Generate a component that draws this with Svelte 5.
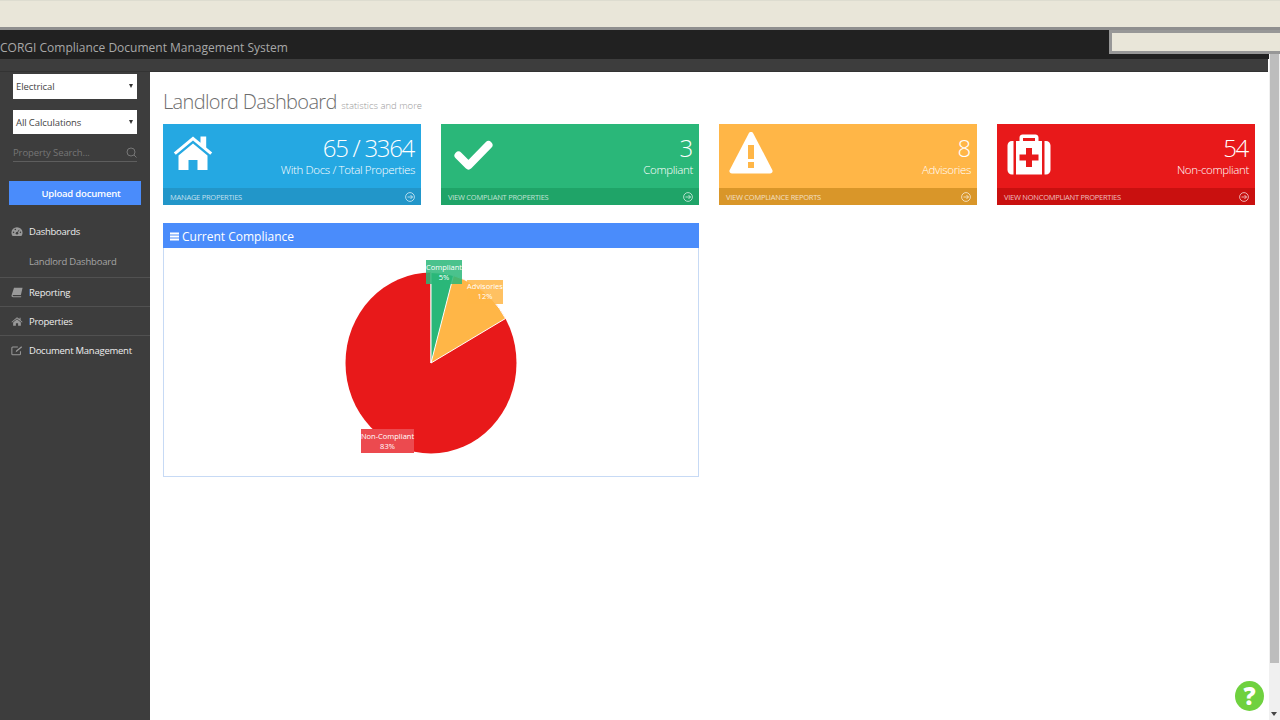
<script>
  const cards = [
    { value: '65 / 3364', label: 'With Docs / Total Properties', link: 'MANAGE PROPERTIES', tone: 'blue', icon: 'home' },
    { value: '3', label: 'Compliant', link: 'VIEW COMPLIANT PROPERTIES', tone: 'green', icon: 'check' },
    { value: '8', label: 'Advisories', link: 'VIEW COMPLIANCE REPORTS', tone: 'amber', icon: 'warn' },
    { value: '54', label: 'Non-compliant', link: 'VIEW NONCOMPLIANT PROPERTIES', tone: 'red', icon: 'kit' }
  ];
</script>

<div class="page">
  <div class="topstrip"></div>
  <header class="brand">CORGI Compliance Document Management System</header>
  <div class="floatbox"></div>
  <div class="band"></div>

  <div class="layout">
    <aside class="sidebar">
      <div class="selectbox first">Electrical<span class="caret"></span></div>
      <div class="selectbox second">All Calculations<span class="caret"></span></div>
      <div class="search">
        <span>Property Search...</span>
        <svg width="11" height="11" viewBox="0 0 11 11" fill="none" stroke="#777" stroke-width="1">
          <circle cx="5" cy="5" r="4" />
          <path d="M8 8l2.5 2.5" />
        </svg>
      </div>
      <button class="upload">Upload document</button>

      <nav>
        <div class="navitem open">
          <svg class="navicon" viewBox="0 0 14 12" fill="#999">
            <path d="M7 1a6.500 6.500 0 0 0-6.500 6.500c0 1.500.5 2.800 1.300 3.800h10.400c.8-1 1.300-2.300 1.300-3.800A6.500 6.500 0 0 0 7 1z" />
            <circle cx="7" cy="8" r="1.500" fill="#3d3d3d" />
            <path d="M7 8l2.500-4" stroke="#3d3d3d" stroke-width="1" />
            <circle cx="3" cy="7" r=".9" fill="#3d3d3d" />
            <circle cx="11" cy="7" r=".9" fill="#3d3d3d" />
            <circle cx="5" cy="3.700" r=".9" fill="#3d3d3d" />
          </svg>
          Dashboards
        </div>
        <div class="subitem">Landlord Dashboard</div>
        <div class="navitem">
          <svg class="navicon" viewBox="0 0 14 12" fill="#999">
            <path d="M3.500 .5h10l-2 8.500H3c-.8 0-1 .4-1 .7s.3.6 1 .6h9l-.3 1.200H2.500C1.200 11.500.500 10.500.6 9.500z" />
          </svg>
          Reporting
        </div>
        <div class="navitem">
          <svg class="navicon" viewBox="0 0 14 12" fill="#999">
            <path d="M7 1L.5 6.500l.7.700L7 2.500l5.800 4.700.7-.7-2.300-2V1.500H10v1.700z" />
            <path d="M2.500 7.200L7 3.500l4.500 3.700V11H8.300V8H5.700v3H2.500z" />
          </svg>
          Properties
        </div>
        <div class="navitem">
          <svg class="navicon" viewBox="0 0 14 12" fill="none" stroke="#999" stroke-width="1.200">
            <path d="M11 7v3c0 .6-.4 1-1 1H2c-.6 0-1-.4-1-1V3c0-.6.4-1 1-1h6" />
            <path d="M5.500 8l.5-2 6-5 1 1.200-6 5z" fill="#999" stroke="none" />
          </svg>
          Document Management
        </div>
      </nav>
    </aside>

    <main class="content">
      <h1>Landlord Dashboard <small>statistics and more</small></h1>

      <div class="cards">
        {#each cards as card}
          <div class="card {card.tone}">
            <div class="cardbody">
              {#if card.icon === 'home'}
                <svg class="bigicon" viewBox="0 0 40 36" fill="#fff">
                  <path d="M20 1.500L.8 17.500l2 2.300L20 5.500l17.200 14.300 2-2.300-6-5V1.500h-5.700v6.300z" />
                  <path d="M5.500 20.500L20 8.500l14.500 12V35H24.500V25h-9v10H5.500z" />
                </svg>
              {:else if card.icon === 'check'}
                <svg class="bigicon check" viewBox="0 0 40 36" fill="none" stroke="#fff" stroke-width="8" stroke-linejoin="round" stroke-linecap="round">
                  <path d="M4.500 17.500L14.500 27.500 34.500 7" />
                </svg>
              {:else if card.icon === 'warn'}
                <svg class="bigicon warn" viewBox="0 0 44 43" fill="#fff">
                  <path d="M22 1c1 0 1.800.5 2.300 1.400l19 36.500c.9 1.800-.3 3.600-2.300 3.600H3c-2 0-3.200-1.800-2.300-3.600l19-36.500C20.200 1.500 21 1 22 1z" />
                  <path d="M19 14h6v14h-6zM19 31h6v6h-6z" fill="#ffb647" />
                </svg>
              {:else}
                <svg class="bigicon kit" viewBox="0 0 44 41" fill="#fff">
                  <path d="M12.500 7V3.500C12.500 1.500 14 .5 15.500.5h13c1.500 0 3 1 3 3V7h-3.500V4H16v3z" />
                  <path d="M9 7h26v33.500H9zM6.500 7v33.500H5c-2.500 0-4.500-2-4.500-4.500V11.500C.5 9 2.500 7 5 7zM37.500 7H39c2.500 0 4.500 2 4.500 4.500V36c0 2.500-2 4.500-4.500 4.500h-1.500z" />
                  <path d="M19 14h6v6.500h6.500v6H25V33h-6v-6.500h-6.500v-6H19z" fill="#e8191a" />
                </svg>
              {/if}
              <div class="stat">
                <div class="value">{card.value}</div>
                <div class="label">{card.label}</div>
              </div>
            </div>
            <div class="cardfoot">
              <span>{card.link}</span>
              <svg width="10" height="10" viewBox="0 0 10 10" fill="none" stroke="currentColor" stroke-width=".9">
                <circle cx="5" cy="5" r="4.400" />
                <path d="M2.500 5h5M5.500 3l2 2-2 2" />
              </svg>
            </div>
          </div>
        {/each}
      </div>

      <section class="panel">
        <div class="panelhead">
          <svg width="9" height="9" viewBox="0 0 9 9" fill="#fff"><path d="M0 .5h9v2H0zM0 3.500h9v2H0zM0 6.500h9v2H0z" /></svg>
          Current Compliance
        </div>
        <svg class="chart" width="534" height="227" viewBox="0 0 534 227">
          <ellipse cx="267" cy="114" rx="85.500" ry="90.500" fill="#e8191a" />
          <path d="M267 114L267 23.500A85.500 90.500 0 0 1 341.500 69.500z" fill="#ffb647" stroke="#fff" stroke-width="1" />
          <path d="M267 114L267 23.500A85.500 90.500 0 0 1 289.500 26.500z" fill="#2ab779" stroke="#fff" stroke-width="1" />

          <rect x="262" y="11" width="36" height="24" fill="#2ab779" fill-opacity=".85" />
          <text x="280" y="21" class="pielabel">Compliant</text>
          <text x="280" y="31" class="pielabel">5%</text>

          <rect x="303" y="31" width="36" height="24" fill="#ffb647" fill-opacity=".85" />
          <text x="321" y="40" class="pielabel">Advisories</text>
          <text x="321" y="50" class="pielabel">12%</text>

          <rect x="197" y="180" width="53" height="24" fill="#ec4a4f" />
          <text x="223.500" y="190" class="pielabel">Non-Compliant</text>
          <text x="223.500" y="200" class="pielabel">83%</text>
        </svg>
      </section>
    </main>

    <div class="scrollbar">
      <div class="thumb"></div>
      <span class="arrow"></span>
    </div>
  </div>

  <div class="help">?</div>
</div>

<style>
  :global(body) {
    margin: 0;
    overflow: hidden;
  }

  .page {
    position: relative;
    width: 1280px;
    height: 720px;
    overflow: hidden;
    font-family: "Open Sans", sans-serif;
    background: #fff;
  }

  .topstrip {
    height: 26px;
    background: #e9e6d9;
    border-top: 1px solid #dddcd0;
    border-bottom: 3px solid #8f8f8f;
  }

  .brand {
    height: 29px;
    padding-top: 3px;
    box-sizing: border-box;
    background: #212121;
    color: #a8a8a8;
    font-size: 12px;
    line-height: 29px;
  }

  .floatbox {
    position: absolute;
    left: 1109px;
    top: 30px;
    width: 171px;
    height: 24px;
    box-sizing: border-box;
    background: #e9e6d9;
    border: 3px solid #979797;
    border-right: 0;
  }

  .band {
    width: 1268px;
    height: 12px;
    background: #3d3d3d;
    border-bottom: 1px solid #333;
  }

  .layout {
    display: flex;
    height: 648px;
  }

  .sidebar {
    width: 150px;
    flex: none;
    background: #3d3d3d;
    padding-top: 2px;
    box-sizing: border-box;
  }

  .selectbox {
    position: relative;
    box-sizing: border-box;
    width: 124px;
    margin-left: 13px;
    padding-left: 3px;
    background: #fff;
    color: #444;
    font-size: 9.500px;
    letter-spacing: -.1px;
  }

  .selectbox.first {
    height: 25px;
    line-height: 26px;
  }

  .selectbox.second {
    height: 24px;
    line-height: 25px;
    margin-top: 11px;
  }

  .caret {
    position: absolute;
    right: 4px;
    top: 10px;
    border: 2.500px solid transparent;
    border-top: 4px solid #333;
    border-bottom: 0;
  }

  .search {
    display: flex;
    justify-content: space-between;
    align-items: center;
    width: 124px;
    height: 18px;
    margin: 9px 0 0 13px;
    border-bottom: 1px solid #5e5e5e;
    color: #767676;
    font-size: 9.500px;
    letter-spacing: -.1px;
  }

  .upload {
    display: block;
    width: 132px;
    height: 24px;
    margin: 19px 0 0 9px;
    padding: 0 0 0 12px;
    border: 0;
    background: #4a8cfb;
    color: #fff;
    font-family: inherit;
    font-size: 9.500px;
    font-weight: 600;
    letter-spacing: -.2px;
  }

  nav {
    margin-top: 11px;
  }

  .navitem {
    display: flex;
    align-items: center;
    height: 28px;
    padding-left: 11px;
    border-top: 1px solid #515151;
    color: #eee;
    font-size: 9.500px;
    letter-spacing: -.25px;
  }

  .navitem.open {
    border-top: 0;
    height: 30px;
  }

  .navicon {
    width: 12px;
    height: 11px;
    margin-right: 6px;
  }

  .subitem {
    height: 31px;
    padding-left: 29px;
    color: #a5a5a5;
    font-size: 9.500px;
    letter-spacing: -.2px;
    line-height: 31px;
  }

  .content {
    flex: 1;
    background: #fff;
    padding: 0 13px;
    min-width: 0;
  }

  h1 {
    margin: 16px 0 0;
    height: 36px;
    color: #6d6d6d;
    font-size: 20px;
    font-weight: 300;
    line-height: 28px;
    letter-spacing: -.65px;
  }

  h1 small {
    color: #999;
    font-size: 9.500px;
    letter-spacing: 0;
  }

  .cards {
    display: grid;
    grid-template-columns: repeat(4, 258px);
    column-gap: 20px;
  }

  .card {
    height: 81px;
    display: flex;
    flex-direction: column;
    color: #fff;
  }

  .cardbody {
    flex: 1;
    display: flex;
    justify-content: space-between;
    padding: 10px 6px 0 10px;
  }

  .bigicon {
    width: 40px;
    height: 36px;
    margin-top: 1px;
  }

  .bigicon.check {
    margin: 4px 0 0 3px;
  }

  .bigicon.warn {
    width: 44px;
    height: 43px;
    margin-top: -3px;
  }

  .bigicon.kit {
    width: 44px;
    height: 41px;
    margin-top: 0;
  }

  .stat {
    text-align: right;
  }

  .value {
    margin-right: 1px;
    font-size: 24px;
    font-weight: 300;
    line-height: 28px;
    letter-spacing: -1.3px;
  }

  .label {
    margin-top: -1px;
    font-size: 11.500px;
    font-weight: 300;
    line-height: 18px;
    letter-spacing: -.35px;
  }

  .cardfoot {
    height: 17px;
    display: flex;
    justify-content: space-between;
    align-items: center;
    padding: 0 6px 0 7px;
    font-size: 7.500px;
    letter-spacing: -.25px;
    color: rgba(255, 255, 255, .72);
  }

  .blue { background: #25a8e2; }
  .blue .cardfoot { background: #2296c9; }
  .green { background: #2ab779; }
  .green .cardfoot { background: #1fa468; }
  .amber { background: #ffb647; }
  .amber .cardfoot { background: #d99629; }
  .red { background: #e8191a; }
  .red .cardfoot { background: #c9100f; }

  .panel {
    width: 536px;
    height: 254px;
    margin-top: 18px;
    box-sizing: border-box;
    border: 1px solid #c7daf5;
    border-top: 0;
  }

  .panelhead {
    display: flex;
    align-items: center;
    gap: 3px;
    height: 25px;
    margin: 0 -1px;
    padding: 1px 0 0 7px;
    box-sizing: border-box;
    background: #4a8cfb;
    color: #fff;
    font-size: 12px;
  }

  .chart {
    display: block;
    margin-top: 1px;
  }

  .pielabel {
    fill: #fff;
    font-size: 7.500px;
    text-anchor: middle;
  }

  .scrollbar {
    position: relative;
    width: 11px;
    height: 666px;
    margin-top: -18px;
    flex: none;
    background: #f0f0f0;
  }

  .thumb {
    position: absolute;
    top: 0;
    left: 1px;
    right: 1px;
    height: 609px;
    background: #bdbdbd;
  }

  .arrow {
    position: absolute;
    left: 2px;
    bottom: 4px;
    border: 3px solid transparent;
    border-top: 4px solid #444;
    border-bottom: 0;
  }

  .help {
    position: absolute;
    left: 1235px;
    top: 681px;
    width: 29px;
    height: 30px;
    border-radius: 50%;
    background: #6fd13f;
    color: #fff;
    font-size: 24px;
    font-weight: 800;
    line-height: 30px;
    text-align: center;
  }
</style>
